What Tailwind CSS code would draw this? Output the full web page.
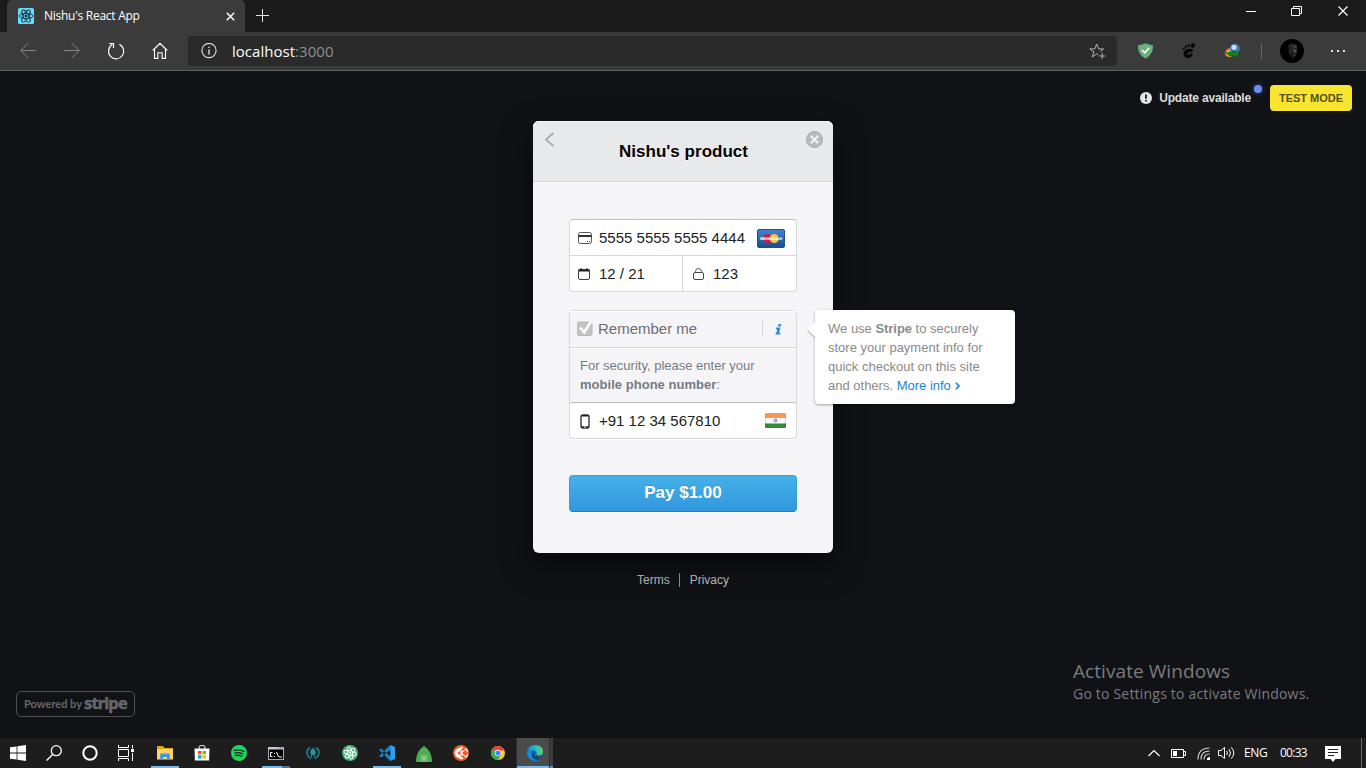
<!DOCTYPE html>
<html lang="en">
<head>
<meta charset="utf-8">
<title>Nishu's React App</title>
<script src="https://cdn.jsdelivr.net/npm/@tailwindcss/browser@4"></script>
</head>
<body class="flex h-[768px] w-[1366px] flex-col overflow-hidden bg-[#111216] font-['Liberation_Sans',sans-serif]">

<!-- Tab strip -->
<header class="flex h-8 shrink-0 bg-[#1b1b1b] pl-[7px] font-['Open_Sans',sans-serif] text-white">
  <div class="flex h-8 w-[238px] items-center rounded-t-[5px] bg-[#3b3b3b] pr-[10px] pl-[11px]">
    <svg class="h-4 w-4" viewBox="0 0 16 16"><rect width="16" height="16" rx="1.5" fill="#61dafb"/><g fill="none" stroke="#20303a" stroke-width=".9"><ellipse cx="8" cy="8" rx="6.800" ry="2.700"/><ellipse cx="8" cy="8" rx="6.800" ry="2.700" transform="rotate(60 8 8)"/><ellipse cx="8" cy="8" rx="6.800" ry="2.700" transform="rotate(120 8 8)"/></g><circle cx="8" cy="8" r="1.400" fill="#20303a"/></svg>
    <span class="ml-[10px] text-[12px] leading-4 tracking-[-0.27px] whitespace-nowrap">Nishu's React App</span>
    <svg class="ml-auto h-[9px] w-[9px]" viewBox="0 0 9 9"><path d="M.8.8l7.400 7.400M8.200.8L.8 8.200" stroke="#fff" stroke-width="1.500"/></svg>
  </div>
  <svg class="mt-[9px] ml-[11px] h-[13px] w-[13px]" viewBox="0 0 13 13"><path d="M6.500 0v13M0 6.500h13" stroke="#e6e6e6"/></svg>
  <div class="mr-[17px] ml-auto flex pt-[5px]">
    <svg class="mr-[35px] h-[13px] w-[11px]" viewBox="0 0 11 13"><path d="M1 6.500h10" stroke="#fff"/></svg>
    <svg class="mr-[34px] h-[13px] w-[12px]" viewBox="0 0 12 13"><path d="M.5 3.500h8v7h-8zM2.500 3.500v-2h8v7h-2" fill="none" stroke="#fff"/></svg>
    <svg class="h-[13px] w-[12px]" viewBox="0 0 12 13"><path d="M1.500 1.500l9 9M10.500 1.500l-9 9" stroke="#fff" stroke-width="1.200"/></svg>
  </div>
</header>

<!-- Toolbar -->
<nav class="flex h-[39px] shrink-0 items-center border-b border-[#5c605e] bg-[#3b3b3b] pl-[6px]">
  <div class="flex w-[182px] items-center">
    <div class="flex w-11 justify-center"><svg class="h-4 w-4" viewBox="0 0 16 16"><path d="M16 7.500H.8M8 .3L.8 7.500 8 14.700" fill="none" stroke="#858585"/></svg></div>
    <div class="flex w-11 justify-center"><svg class="h-4 w-4" viewBox="0 0 16 16"><path d="M0 7.500h15.200M8 .3L15.200 7.500 8 14.700" fill="none" stroke="#858585"/></svg></div>
    <div class="flex w-11 justify-center"><svg class="h-[18px] w-[18px]" viewBox="0 0 18 18"><path d="M12.500 2.400A7.600 7.600 0 1 1 5 2.800M2.200 1.600H6.500V6" fill="none" stroke="#fff" stroke-width="1.200"/></svg></div>
    <div class="flex w-11 justify-center"><svg class="h-[18px] w-4" viewBox="0 0 16 18"><path d="M.7 8.500L8 1.300l7.300 7.200M2.500 7.500v8.900h3.400v-5.700h4.200v5.700h3.400V7.500" fill="none" stroke="#fff" stroke-width="1.100"/></svg></div>
  </div>
  <div class="flex h-[30px] w-[929px] items-center rounded-[3px] bg-[#2a2a2a] pr-[11px] pl-[13px] font-['Open_Sans',sans-serif]">
    <svg class="h-4 w-4" viewBox="0 0 16 16"><circle cx="8" cy="7.500" r="7.100" fill="none" stroke="#e4e4e4" stroke-width="1.100"/><path d="M8 6.500v5M8 3.700V5" stroke="#fff" stroke-width="1.200"/></svg>
    <span class="ml-[15px] text-[15px] tracking-[0.03px] text-white">localhost<span class="text-[#8f8f8f]">:3000</span></span>
    <svg class="ml-auto h-[17px] w-[17px]" viewBox="0 0 17 17"><path d="M9.500 11.900L7.700 10.800 3.300 14l1.600-5.200L.8 5.900h5L7.700 1l1.900 4.900h5L11.300 8.500M13.200 10v6M10.200 13h6" fill="none" stroke="#b4b4b4"/></svg>
  </div>
  <svg class="ml-[20px] h-[18px] w-[17px]" viewBox="0 0 18 18"><path d="M1 2.800Q5.500 2.400 9 .8q3.600 1.600 8 2 .2 9.700-8 14.400Q.6 12.500 1 2.800z" fill="#67b279"/><path d="M5.200 8l3 3 4.800-5.500" fill="none" stroke="#fff" stroke-width="1.700"/></svg>
  <svg class="ml-[27px] h-[16px] w-[16px]" viewBox="0 0 16 16" fill="#060606"><ellipse cx="11.800" cy="2.500" rx="2" ry="2.500" transform="rotate(25 11.800 2.500)"/><circle cx="7.700" cy="2.600" r="1.400"/><circle cx="4.700" cy="4" r="1.200"/><circle cx="2.700" cy="6" r="1.100"/><path d="M12.200 6.500C9 4.700 3 6.300 2.600 10c-.4 3.600 3 5.700 6 4.900 3.200-.8 3.700-4.600 1.500-4.600-1.500 0-1.400 1.700-2.900 1.500-1.400-.3-.8-2 .4-2.400 2-.6 4.800-.4 4.600-2.900z"/></svg>
  <svg class="ml-[27px] h-[16px] w-[17px]" viewBox="0 0 17 16"><ellipse cx="6" cy="9.500" rx="5.600" ry="4.600" fill="#d9531e" transform="rotate(-25 6 9.500)"/><ellipse cx="6.500" cy="9.700" rx="4.700" ry="3.600" fill="#f2dd33" transform="rotate(-25 6.500 9.700)"/><ellipse cx="7" cy="10" rx="3.500" ry="2.600" fill="#2d9a3a" transform="rotate(-25 7 10)"/><circle cx="10.800" cy="5.800" r="5" fill="#4477b5"/><circle cx="10" cy="4.300" r="2.600" fill="#c6dff0"/><path d="M1.500 9q3 2.500 7 .7V8l8 2-5.500 5-.7-2.300Q5 14.500 1.500 9z" fill="#15801b" stroke="#07420b" stroke-width=".5"/></svg>
  <div class="ml-[20px] h-4 w-px bg-[#666]"></div>
  <svg class="ml-[18px] h-6 w-6" viewBox="0 0 24 24"><circle cx="12" cy="12" r="12" fill="#000"/><path d="M8.500 5.500Q12.500 3.500 17 5.800l-.4 9-3.600 4.700-4.200-5z" fill="#232323"/><path d="M13 6.500l3.600.5-.2 7-1.400 3-1.500-1 1.500-2-1.500-1z" fill="#4a4a4a"/><path d="M13 9l3 .4M11 14.500q2.500 1.800 5-.3" fill="none" stroke="#0c0c0c"/></svg>
  <svg class="ml-[26px] h-[4px] w-4" viewBox="0 0 16 4" fill="#e4e4e4"><path d="M1 1h2v2H1zM7 1h2v2H7zM13 1h2v2h-2z"/></svg>
</nav>

<!-- Checkout page -->
<main class="relative flex h-[667px] shrink-0 flex-col items-center bg-[#111216] pt-[50px]">
  <div class="absolute top-[14px] right-[14px] flex h-[26px] items-center">
    <div class="relative flex items-center pr-[19px]">
      <svg class="h-3 w-3" viewBox="0 0 12 12"><circle cx="6" cy="6" r="6" fill="#e5e5e6"/><path d="M6 2.500v4.200M6 8v1.600" stroke="#111216" stroke-width="1.700"/></svg>
      <span class="ml-[7px] text-[12px] leading-4 font-bold tracking-[-0.18px] whitespace-nowrap text-[#dddddf]">Update available</span>
      <span class="absolute top-[-5px] right-[8px] h-2 w-2 rounded-full bg-[#6b8eef] shadow-[0_0_5px_#38509b]"></span>
    </div>
    <div class="flex h-[26px] w-[82px] items-center justify-center rounded-[4px] bg-[#f9e52f] text-[11px] font-bold whitespace-nowrap text-[#54501f]">TEST MODE</div>
  </div>

  <section class="relative flex h-[432px] w-[300px] shrink-0 flex-col rounded-[6px] bg-[#f5f5f7] shadow-[0_12px_30px_0_rgba(0,0,0,0.6)]">
    <div class="flex h-[61px] shrink-0 justify-between rounded-t-[6px] border-b border-[#cfcfd1] bg-[#e8e9eb] pr-[10px] pl-[11px] shadow-[inset_0_1px_0_#f5f5f6,0_1px_0_#fff]">
      <div class="w-[17px] pt-[11px]"><svg class="h-[15px] w-[11px]" viewBox="0 0 11 15"><path d="M9.300 1L2 7.500 9.300 14" fill="none" stroke="#acacae" stroke-width="1.900"/></svg></div>
      <h1 class="mt-[21px] text-[17px] leading-5 font-bold tracking-[0.02px] text-black [text-shadow:0_1px_0_#fff]">Nishu's product</h1>
      <svg class="mt-[10px] h-[17px] w-[17px]" viewBox="0 0 17 17"><circle cx="8.500" cy="8.500" r="8" fill="#bababc" stroke="#a8a8aa"/><path d="M4.800 4.800l7.400 7.400M12.200 4.800l-7.400 7.400" stroke="#f3f3f4" stroke-width="2"/></svg>
    </div>

    <div class="flex flex-col px-[36px] pt-[37px] text-[15px] text-[#222]">
      <!-- Card details -->
      <div class="h-[73px] rounded-[4px] border border-[#d8d8da] border-t-[#bebec0] bg-white">
        <div class="flex h-[36px] items-center border-b border-[#d8d8da] pr-[11px] pl-[8px]">
          <svg class="h-3 w-[14px]" viewBox="0 0 14 12"><rect x=".5" y=".5" width="13" height="11" rx="1.800" fill="none" stroke="#555"/><path d="M.5 4h13" stroke="#333" stroke-width="2"/><path d="M9 9.500h1M11 9.500h1" stroke="#444"/></svg>
          <span class="ml-[7px] leading-5 whitespace-nowrap">5555 5555 5555 4444</span>
          <svg class="mt-[2px] ml-auto h-[20px] w-[28px]" viewBox="0 0 28 20"><defs><linearGradient id="mc" x2="0" y2="1"><stop stop-color="#4585cf"/><stop offset="1" stop-color="#184a91"/></linearGradient></defs><rect x=".5" y=".5" width="27" height="18" rx="1.500" fill="url(#mc)" stroke="#1d5096"/><circle cx="10.700" cy="9.500" r="4.500" fill="#dd173a"/><circle cx="17.300" cy="9.500" r="4.500" fill="#f4c64a"/><path d="M4 10.500Q8 7.800 14 9.500t10-1" fill="none" stroke="#fff" stroke-opacity=".45" stroke-width="1.500"/><text x="14" y="11" text-anchor="middle" font-size="4" font-style="italic" font-weight="bold" fill="#fff" font-family="Liberation Sans">MasterCard</text></svg>
        </div>
        <div class="flex h-[35px]">
          <div class="flex w-[113px] items-center border-r border-[#d8d8da] pl-[8px]">
            <svg class="h-3 w-3" viewBox="0 0 12 12"><rect x=".5" y="1.500" width="11" height="10" rx="1.500" fill="none" stroke="#444"/><path d="M.5 2.500h11" stroke="#222" stroke-width="2"/><path d="M3 0v2M9 0v2" stroke="#222"/></svg>
            <span class="mt-px ml-[9px] leading-5">12 / 21</span>
          </div>
          <div class="flex items-center pl-[10px]">
            <svg class="h-3 w-[11px]" viewBox="0 0 11 12"><rect x=".5" y="4.500" width="10" height="7" rx="1.500" fill="none" stroke="#444"/><path d="M2.500 4.500V3.500q0-3 3-3t3 3v1" fill="none" stroke="#555"/></svg>
            <span class="mt-px ml-[9px] leading-5">123</span>
          </div>
        </div>
      </div>

      <!-- Remember me -->
      <div class="mt-[18px] h-[129px] rounded-[4px] border border-[#d8d8da] shadow-[0_1px_0_#fff]">
        <div class="flex h-[37px] items-center border-b border-[#d8d8da] pl-[7px] shadow-[inset_0_1px_0_#fff,0_1px_0_#fff]">
          <svg class="h-4 w-4" viewBox="0 0 16 16"><rect x=".5" y="1" width="14.500" height="13.500" rx="1.500" fill="#c2c2c3" stroke="#b8b8ba"/><path d="M3 6.500l4.200 4.800L14 .5" fill="none" stroke="#fff" stroke-width="2.600"/></svg>
          <span class="ml-[5px] text-[#6b6b75] [text-shadow:0_1px_0_#fff]">Remember me</span>
          <div class="ml-auto h-4 w-px bg-[#d3d3d6]"></div>
          <div class="flex w-[33px] justify-center pr-[3px]">
            <svg class="h-[11px] w-[7px]" viewBox="0 0 7 11"><path d="M3.500 0H6.300L5.700 2.500H2.900zM1.200 3.500H5.300L4.200 8.800H5.300v1.700H.4L.8 8.800h.7l.7-3.600H.9z" fill="#2490e5"/></svg>
          </div>
        </div>
        <p class="h-[55px] pt-[8px] pl-[10px] text-[13px] leading-[19px] whitespace-nowrap text-[#777782] [text-shadow:0_1px_0_#fff]">For security, please enter your<br><b class="tracking-[0.03px]">mobile phone number</b>:</p>
        <div class="-mx-px -mt-px flex h-[37px] items-center rounded-[4px] border border-[#d8d8da] border-t-[#bebec0] bg-white pr-[10px] pl-[10px]">
          <svg class="mt-px h-[15px] w-[10px]" viewBox="0 0 10 15"><rect x="1" y="1" width="8" height="13" rx="1.800" fill="none" stroke="#333" stroke-width="1.400"/><path d="M1.500 1.800h7M1.500 13h7" stroke="#222" stroke-width="1.500"/><path d="M4 13h2" stroke="#fff"/></svg>
          <span class="mt-px ml-[9px] leading-5 whitespace-nowrap">+91 12 34 567810</span>
          <svg class="ml-auto h-[15px] w-[21px]" viewBox="0 0 21 15"><rect width="21" height="15" rx="1.500" fill="#f7f7f7"/><path d="M1.500 0h18Q21 0 21 1.500V5H0V1.500Q0 0 1.500 0z" fill="#f89852"/><path d="M0 10.500h21v3q0 1.500-1.500 1.500h-18Q0 15 0 13.500z" fill="#2f8b38"/><circle cx="10.500" cy="7.500" r="1.200" fill="none" stroke="#4054f0"/><path d="M.5 1v13M20.500 1v13" stroke="#000" stroke-opacity=".1"/></svg>
        </div>
      </div>

      <button class="mt-[36px] h-[37px] rounded-[4px] border border-t-[#3aa2de] border-r-[#369add] border-b-[#2878ba] border-l-[#369add] bg-linear-to-b from-[#45b1e8] to-[#3097de] pb-px text-[17px] leading-5 font-bold text-white shadow-[0_1px_0_#fff] [text-shadow:0_-1px_0_rgba(0,0,0,0.15)]">Pay $1.00</button>
    </div>

    <!-- Tooltip -->
    <div class="absolute top-[189px] left-[282px] h-[94px] w-[200px] rounded-[4px] bg-white pt-[9px] pl-[13px] text-[13px] leading-[19px] whitespace-nowrap text-[#8a8a8a] shadow-[0_1px_3px_rgba(0,0,0,0.35)]">
      <svg class="absolute top-[11px] left-[-8px] h-[18px] w-[9px]" viewBox="0 0 9 18"><path d="M.5 9L8 16.800" fill="none" stroke="#b4b4b6" stroke-width="1.500"/><path d="M9 0L.5 8.500 9 17z" fill="#fff"/></svg>
      <div class="h-[19px]">We use <b class="tracking-[-0.05px]">Stripe</b> to securely</div>
      <div class="h-[19px]">store your payment info for</div>
      <div class="h-[19px]">quick checkout on this site</div>
      <div class="h-[19px]">and others. <a class="text-[#1a84dc]">More info<svg class="ml-[4px] inline h-[8px] w-[5px] align-[0px]" viewBox="0 0 5 8"><path d="M.8.8L4 4 .8 7.200" fill="none" stroke="#1a84dc" stroke-width="1.600"/></svg></a></div>
    </div>
  </section>

  <footer class="mt-[19px] flex items-center text-[12px] leading-4 text-[#c2c2c3]">
    <span class="pr-[9px]">Terms</span><span class="h-[14px] w-px bg-[#98989a]"></span><span class="pl-[10px]">Privacy</span>
  </footer>

  <div class="absolute bottom-[21px] left-[16px] flex h-[26px] w-[119px] items-center rounded-[5px] border border-[#505156] pl-[7px] whitespace-nowrap text-[#66676b]">
    <span class="w-[57px] font-['Lato',sans-serif] text-[11px] font-bold">Powered by</span>
    <span class="mt-[-3px] ml-[3px] font-['Noto_Sans',sans-serif] text-[16.500px] leading-5 font-bold tracking-[-0.85px] [-webkit-text-stroke:0.5px_#66676b]">stripe</span>
  </div>

  <div class="absolute top-[587px] left-[1073px] font-['Open_Sans',sans-serif] whitespace-nowrap text-[#7b7c7e]">
    <div class="text-[19px] leading-[26px] tracking-[0.07px]">Activate Windows</div>
    <div class="pt-px text-[14px] leading-[18px] tracking-[0.2px]">Go to Settings to activate Windows.</div>
  </div>
</main>

<!-- Taskbar -->
<footer class="flex h-[30px] shrink-0 bg-[#1d1d1d] font-['Open_Sans',sans-serif] text-white">
  <div class="flex w-9 items-center justify-center"><svg class="h-4 w-4" viewBox="0 0 16 16" fill="#fff"><path d="M0 2.300l6.600-.9v6.200H0zM7.400 1.300L16 0v7.600H7.400zM0 8.400h6.600v6.200L0 13.700zM7.400 8.400H16V16l-8.600-1.200z"/></svg></div>
  <div class="flex w-9 items-center justify-center"><svg class="h-4 w-4" viewBox="0 0 16 16"><circle cx="10.300" cy="5.700" r="5" fill="none" stroke="#fff" stroke-width="1.300"/><path d="M6.800 9.200L.6 15.400" stroke="#fff" stroke-width="1.400"/></svg></div>
  <div class="flex w-9 items-center justify-center"><svg class="h-4 w-4" viewBox="0 0 16 16"><circle cx="8" cy="8" r="6.700" fill="none" stroke="#fff" stroke-width="2"/></svg></div>
  <div class="flex w-9 items-center justify-center"><svg class="h-[16px] w-4" viewBox="0 0 16 16"><path d="M.5 0v2.500h10V0M.5 16v-2.500h10V16M.5 4.500h10v7H.5zM14.500 0v3.500M14.500 8v8" fill="none" stroke="#fff"/><path d="M13 4h3v3h-3z" fill="#fff"/></svg></div>

  <div class="ml-[2px] flex">
    <!-- Explorer -->
    <div class="flex w-[37px] flex-col items-center"><div class="flex h-7 items-center pt-[2px]"><svg class="h-4 w-4" viewBox="0 0 16 16"><path d="M0 1h6l1.500 2H16v11H0z" fill="#e6a41d"/><path d="M0 4h16v10.500H0z" fill="#ffd466"/><path d="M3.200 15V9.500q0-1 1-1h7.600q1 0 1 1V15H10v-3H6v3z" fill="#3f95e4"/></svg></div><div class="h-[2px] w-7 bg-[#76b9ed]"></div></div>
    <!-- Store -->
    <div class="flex w-[37px] items-center justify-center"><svg class="h-4 w-4" viewBox="0 0 16 16"><path d="M5 4V2.500q0-2 3-2t3 2V4" fill="none" stroke="#ddd" stroke-width="1.100"/><path d="M.5 3.500h15l-.4 12H.9z" fill="#fff"/><path d="M4 6h3.500v3.300H4z" fill="#f25022"/><path d="M8.500 6H12v3.300H8.500z" fill="#7fba00"/><path d="M4 10.200h3.500v3.300H4z" fill="#00a4ef"/><path d="M8.500 10.200H12v3.300H8.500z" fill="#ffb900"/></svg></div>
    <!-- Spotify -->
    <div class="flex w-[37px] items-center justify-center"><svg class="h-4 w-4" viewBox="0 0 16 16"><circle cx="8" cy="8" r="8" fill="#1ed760"/><path d="M3.300 5.400q5-1.500 9.600 1M3.800 8.100q4.300-1.200 8 .9M4.200 10.600q3.600-.9 6.600.8" fill="none" stroke="#152a1c" stroke-width="1.400" stroke-linecap="round"/></svg></div>
    <!-- Command prompt -->
    <div class="flex w-[37px] flex-col items-center"><div class="flex h-7 items-center pt-[3px]"><svg class="h-[13px] w-4" viewBox="0 0 16 13"><rect x=".5" y=".5" width="15" height="12" fill="#000" stroke="#a6abb0"/><path d="M0 0h16v2.500H0z" fill="#c3c9ce"/><path d="M10 1h1M12 1h1M14 1h1" stroke="#425b85"/><path d="M4.500 5.500h-2v4h2M6.500 6v1M6.500 9v1M8.500 5l2 5M11 10h3" fill="none" stroke="#fff"/></svg></div><div class="flex h-[2px] w-7 bg-[#76b9ed]"><span class="ml-auto w-[8px] bg-[#4d7898]"></span></div></div>
    <!-- GitKraken -->
    <div class="flex w-[37px] items-center justify-center"><svg class="h-4 w-4" viewBox="0 0 16 16"><circle cx="8" cy="8" r="7.500" fill="#162334"/><path d="M5 2.500Q-.5 6 3.500 11.500L6 13.500M11 2.500q5.500 3.500 1.500 9L10 13.500" fill="none" stroke="#23847e" stroke-width="1.500"/><path d="M8 3q3 2 2.700 5.500l-.9 1v3H9v-2.500H7v2.500h-.8v-3l-.9-1Q5 5 8 3z" fill="#23988e"/></svg></div>
    <!-- Atom -->
    <div class="flex w-[37px] items-center justify-center"><svg class="h-4 w-4" viewBox="0 0 16 16"><circle cx="8" cy="8" r="8" fill="#49af78"/><g fill="none" stroke="#effff5" stroke-width="1.100"><ellipse cx="8" cy="8" rx="6.200" ry="2.300" transform="rotate(15 8 8)"/><ellipse cx="8" cy="8" rx="6.200" ry="2.300" transform="rotate(75 8 8)"/><ellipse cx="8" cy="8" rx="6.200" ry="2.300" transform="rotate(135 8 8)"/></g><circle cx="8" cy="8" r="1" fill="#fff"/></svg></div>
    <!-- VS Code -->
    <div class="flex w-[37px] flex-col items-center"><div class="flex h-7 items-center pt-[2px]"><svg class="h-4 w-4" viewBox="0 0 16 16"><path d="M11.500 0v4.500L2 12.500.2 11 11 .2zM11.500 16v-4.500L2 3.500.2 5 11 15.800z" fill="#1686d0"/><path d="M11.300 0L16 2v12l-4.700 2z" fill="#2aa4f1"/></svg></div><div class="h-[2px] w-7 bg-[#76b9ed]"></div></div>
    <!-- Robo 3T -->
    <div class="flex w-[37px] items-center justify-center pt-px"><svg class="h-4 w-4" viewBox="0 0 16 16"><path d="M8 0q7.500 5 8 14.500 0 1.500-1 1.500H1q-1 0-1-1.500Q.5 5 8 0z" fill="#4caf50"/><circle cx="8" cy="12.500" r="3.200" fill="#8bd08e"/><circle cx="8" cy="12.700" r="1.600" fill="#e2f5e2" stroke="#3f9b43"/></svg></div>
    <!-- Orange arrow badge -->
    <div class="flex w-[37px] items-center justify-center"><svg class="h-4 w-4" viewBox="0 0 16 16"><circle cx="8" cy="8" r="7.300" fill="#f05a28" stroke="#f05a28" stroke-width="1.400"/><path d="M3 4.500L8.500 1.500l2 1L7 5.500h4.500L9 8l2.500 2.500H7l3.500 3-2 1L3 11.500 1.500 8z" fill="#fff"/><path d="M4 8l4-2.500-.8 2.500.8 2.500z" fill="#f05a28"/><path d="M11 5l2.500-1 1 3M11 11l2.500 1 1-3" fill="none" stroke="#fff" stroke-width="1.200"/></svg></div>
    <!-- Chrome -->
    <div class="flex w-[37px] items-center justify-center"><svg class="h-[14px] w-[14px]" viewBox="0 0 14 14"><circle cx="7" cy="7" r="7" fill="#fcc934"/><path d="M7 7L.9 3.500A7 7 0 0 1 13.100 3.500z" fill="#ea4335"/><path d="M7 7L.9 3.500A7 7 0 0 0 7 14l3-5z" fill="#34a853"/><path d="M7 3.500h6.100" stroke="#ea4335"/><circle cx="7" cy="7" r="3.300" fill="#fff"/><circle cx="7" cy="7" r="2.600" fill="#4285f4"/></svg></div>
    <!-- Edge -->
    <div class="flex w-[37px] bg-[#2f2f2f]">
      <div class="ml-px flex w-[32px] flex-col items-center bg-[#4b4b4b]"><div class="flex h-[28px] items-center pt-[2px] pl-[4px]"><svg class="h-4 w-4" viewBox="0 0 16 16"><defs><linearGradient id="eg"><stop stop-color="#1685d4"/><stop offset=".6" stop-color="#2bbfc5"/><stop offset="1" stop-color="#65d748"/></linearGradient></defs><circle cx="8" cy="8" r="8" fill="#1269b8"/><path d="M8.500 7q0 4 7 4l.8-1.500V12L9 12z" fill="#4b4b4b"/><path d="M0 8Q.5 0 8 0t8 6.500q0 3.700-4 3.800-3 0-2.500-1.500Q10 6 6.500 5.200 2 4.500 0 8z" fill="url(#eg)"/><path d="M0 8q2-3.500 6-3Q3.500 7 5 11t7 4Q8 17 4 14.500T0 8z" fill="#168bdc"/><path d="M8 6q-2.500 2-1 4.600t7.500 1.700Q12 15 9 14.600 5.500 14 5 10.500 4.800 7 8 6z" fill="#103f7c"/></svg></div><div class="h-[2px] w-full bg-[#76b9ed]"></div></div>
      <div class="ml-px flex h-full w-[3px] items-end bg-[#3d3d3d]"><span class="h-[2px] w-full bg-[#5e93bc]"></span></div>
    </div>
  </div>

  <!-- System tray -->
  <div class="ml-auto flex items-center">
    <svg class="h-[8px] w-[12px]" viewBox="0 0 12 8"><path d="M.5 7L6 1.500 11.500 7" fill="none" stroke="#fff" stroke-width="1.200"/></svg>
    <svg class="ml-[11px] h-[10px] w-[15px]" viewBox="0 0 15 10"><path d="M.5 1.500h12v8H.5zM13 3.500h1.500v4H13" fill="none" stroke="#fff"/><path d="M2 3h4v5H2z" fill="#fff"/></svg>
    <svg class="ml-[11px] h-[13px] w-[13px]" viewBox="0 0 13 13"><g fill="none" stroke="#d7d7d7" stroke-width="1.100"><path d="M1 12.500Q1 1 12.500 1M4 12.500Q4 4 12.500 4M7 12.500Q7 7 12.500 7"/></g><path d="M10 13q-.5-3 3-3v3z" fill="#fff"/></svg>
    <svg class="ml-[8px] h-[14px] w-[17px]" viewBox="0 0 17 14"><path d="M.5 4.500H3L6.500 1.500v11L3 9.500H.5z" fill="none" stroke="#fff"/><path d="M8.700 5q1.500 2 0 4M11 3.200q3 3.800 0 7.600M13.300 1.400q5 5.600 0 11.200" fill="none" stroke="#fff"/></svg>
    <span class="ml-[9px] w-[36px] text-[12px] tracking-[-0.4px]">ENG</span>
    <span class="w-[45px] text-[12px] tracking-[-0.75px]">00:33</span>
    <svg class="mt-[2px] h-[16px] w-4" viewBox="0 0 16 16"><path d="M0 0h16v13h-5.500L8 16l-2.500-3H0z" fill="#fff"/><path d="M3 3.500h10M3 6.500h10M3 9.500h6" stroke="#222"/></svg>
    <div class="mr-[4px] ml-[20px] h-[30px] w-px bg-[#646464]"></div>
  </div>
</footer>
</body>
</html>
